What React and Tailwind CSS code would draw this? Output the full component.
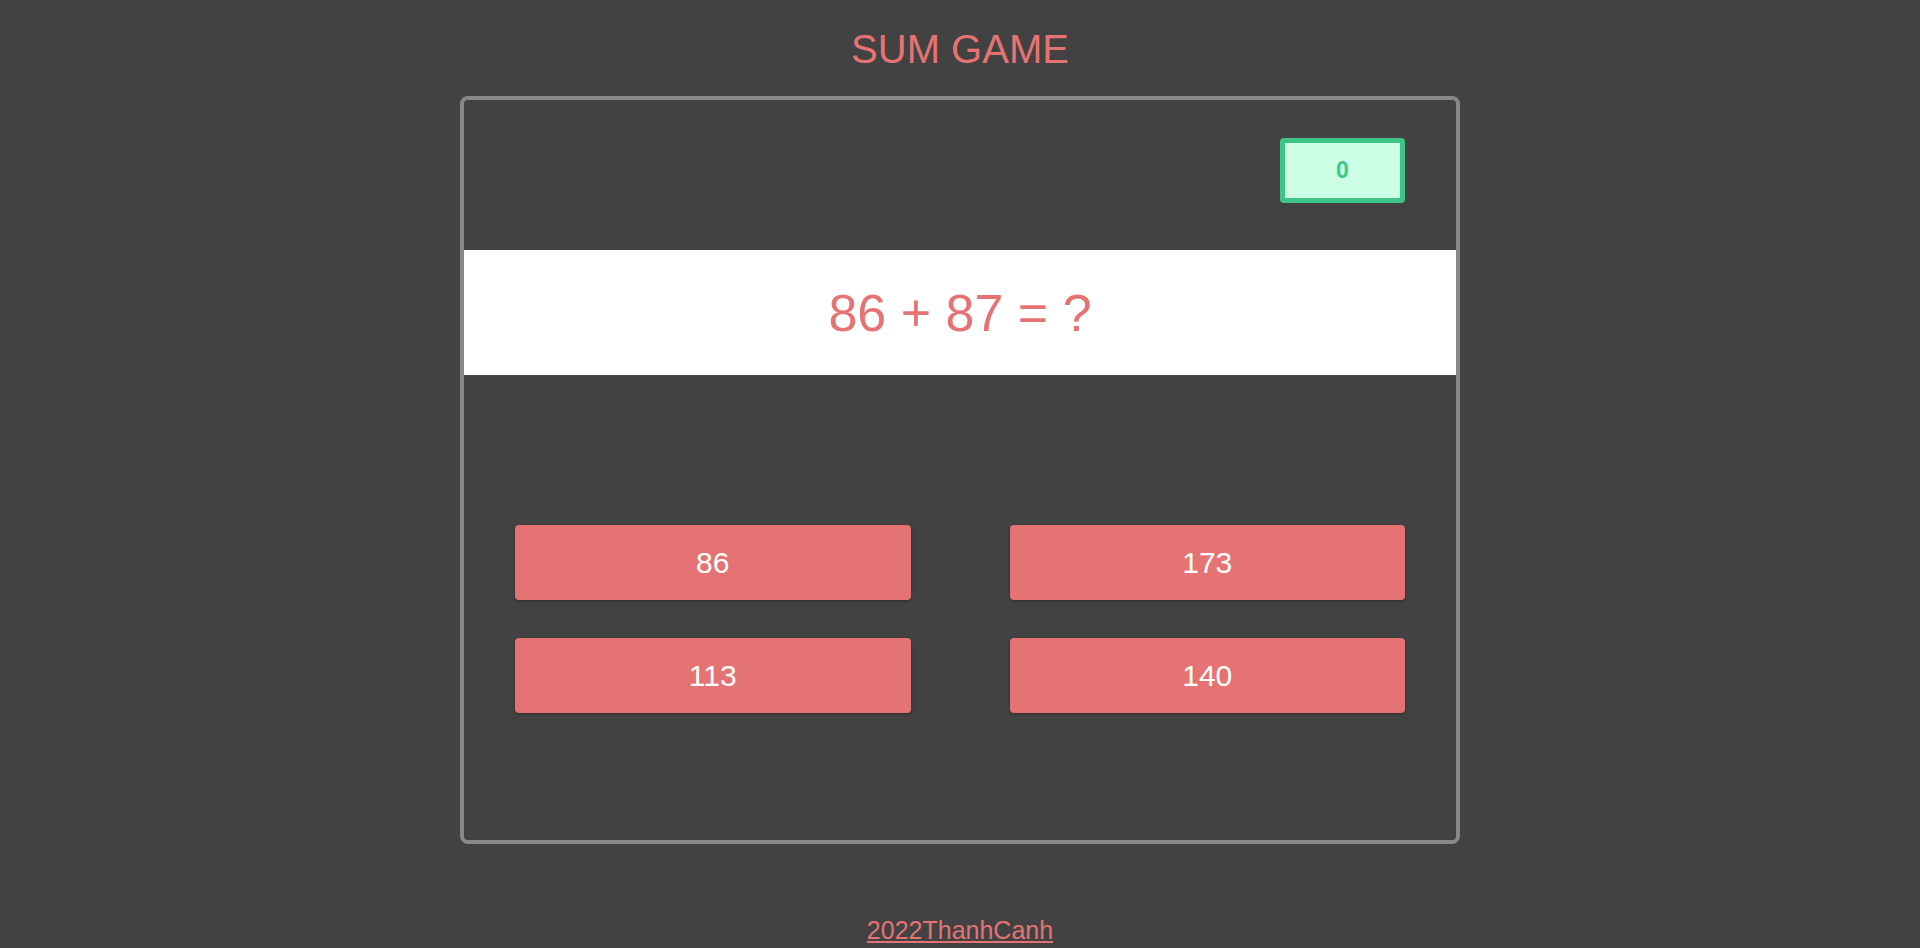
export default function App() {
  const answers = [86, 173, 113, 140];

  return (
    <div className="min-h-screen bg-[#424242] flex flex-col items-center" style={{ fontFamily: '"Liberation Sans", Arial, sans-serif' }}>
      {/* Title */}
      <h1 className="mt-[26px] text-[40px] leading-[46px] text-[#e57373] font-normal">SUM GAME</h1>

      {/* Game card */}
      <div className="mt-[24px] w-[1000px] h-[748px] border-4 border-[#888888] rounded-lg flex flex-col">
        <div className="flex justify-end pt-[38px] pr-[51px]">
          <div className="w-[125px] h-[65px] border-[5px] border-[#3fc687] bg-[#ccffe5] rounded-[4px] flex items-center justify-center text-[23px] font-bold text-[#3fc687]">
            0
          </div>
        </div>

        <div className="mt-[47px] h-[125px] bg-white flex items-center justify-center text-[52px] text-[#e57373]">
          86 + 87 = ?
        </div>

        <div className="mt-[150px] grid grid-cols-2 gap-x-[99px] gap-y-[38px] px-[51px]">
          {answers.map((n) => (
            <button
              key={n}
              className="h-[75px] bg-[#e57373] rounded-[4px] text-white text-[30px] shadow-[0_1px_3px_rgba(0,0,0,0.35)]"
            >
              {n}
            </button>
          ))}
        </div>
      </div>

      {/* Footer */}
      <a href="#" className="mt-[72px] text-[25px] leading-[29px] text-[#e57373] underline">
        2022ThanhCanh
      </a>
    </div>
  );
}
